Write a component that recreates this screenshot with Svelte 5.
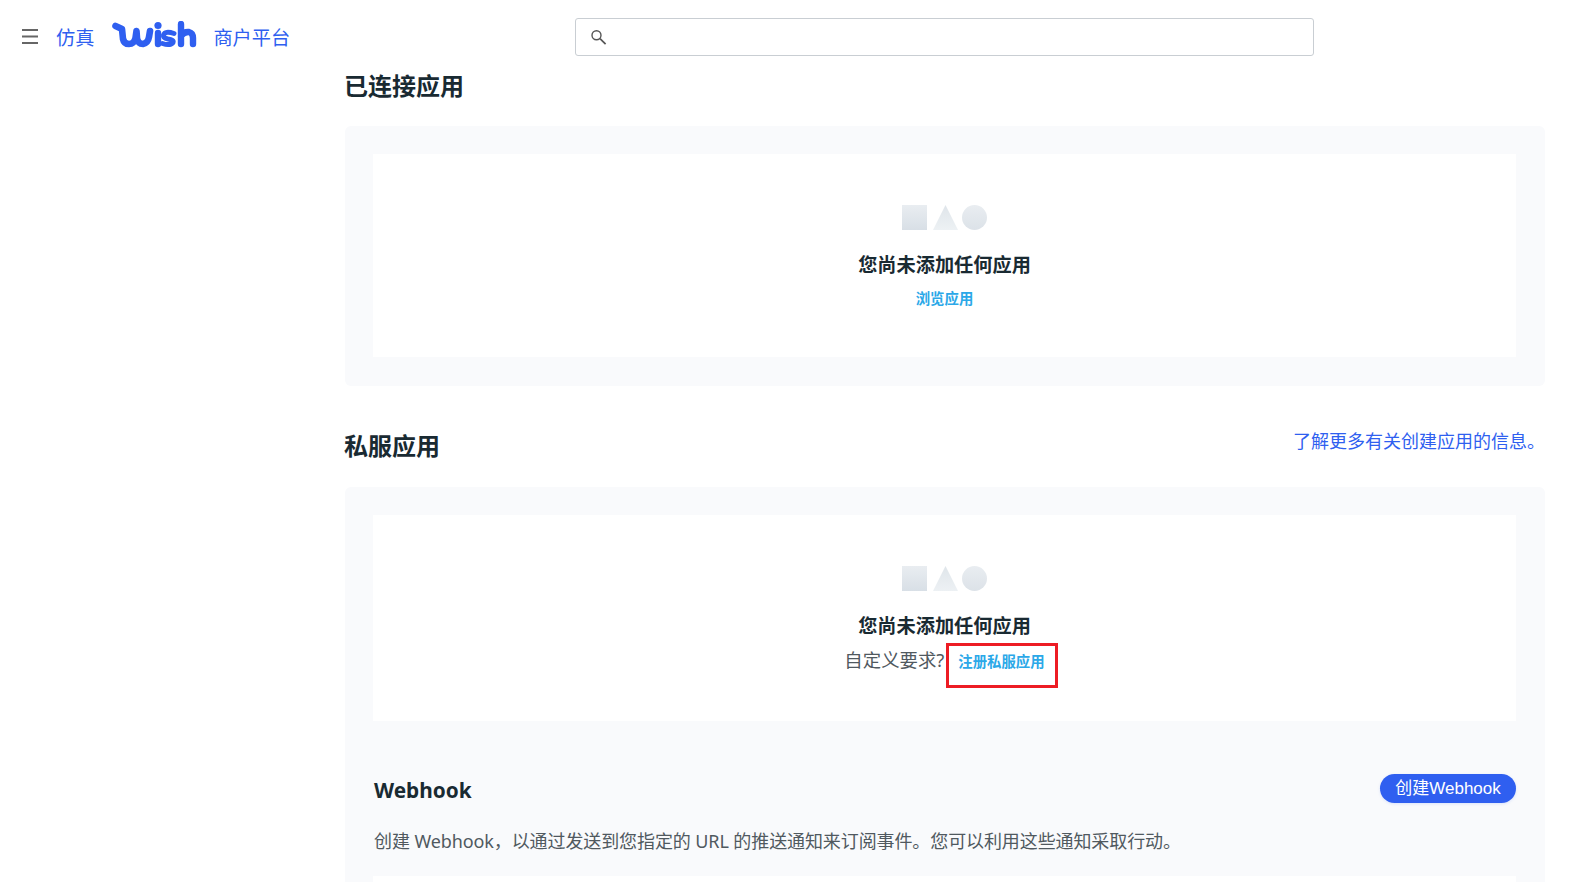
<script>
  const connected = { title: "已连接应用" };
</script>

<div class="page">
  <header class="topbar">
    <div class="brand">
      <svg class="menu" width="16" height="15" viewBox="0 0 16 15" aria-hidden="true">
        <path d="M0 1h16M0 7.5h16M0 14h16" stroke="#666" stroke-width="2" fill="none" />
      </svg>
      <span class="brand-text sim">仿真</span>
      <svg class="logo" width="85" height="28" viewBox="0 0 85 28" aria-hidden="true">
        <g fill="none" stroke="#2f5ff0" stroke-linecap="round" stroke-linejoin="round">
          <path stroke-width="6.6" d="M3.5 5 L10 8 L11 18 Q12 23 17 23 Q22 23 23.5 17 L24.5 10 L25 17 Q26 23 31 23 Q36 22 37 16 L38 10" />
          <path stroke-width="6.4" d="M46 12 V23" />
          <path stroke-width="5" d="M62 12.5 Q53 9.5 51.5 14 Q51 17 56 18 Q62 19 61 21.5 Q58 25 50.5 22.5" />
          <path stroke-width="6.4" d="M69 3 V23 M69 15 Q72 10.5 77 11 Q81 12 81 17 V23" />
        </g>
        <circle cx="46" cy="4.5" r="3.6" fill="#2f5ff0" />
      </svg>
      <span class="brand-text">商户平台</span>
    </div>
    <div class="search">
      <svg width="16" height="15" viewBox="0 0 16 15" aria-hidden="true">
        <circle cx="5.5" cy="5.2" r="4.5" stroke="#555" stroke-width="1.4" fill="none" />
        <path d="M9 8.6l5.6 5.6" stroke="#555" stroke-width="1.7" fill="none" />
      </svg>
    </div>
  </header>

  <main class="content">
    <section>
      <h2 class="first">{connected.title}</h2>
      <div class="panel">
        <div class="inner">
          <div class="shapes">
            <span class="square"></span>
            <span class="triangle"></span>
            <span class="circle"></span>
          </div>
          <p class="empty-title">您尚未添加任何应用</p>
          <a class="link browse" href="#browse">浏览应用</a>
        </div>
      </div>
    </section>

    <section class="private">
      <div class="section-head">
        <h2>私服应用</h2>
        <a class="learn" href="#learn">了解更多有关创建应用的信息。</a>
      </div>
      <div class="panel open">
        <div class="inner tall">
          <div class="shapes">
            <span class="square"></span>
            <span class="triangle"></span>
            <span class="circle"></span>
          </div>
          <p class="empty-title">您尚未添加任何应用</p>
          <div class="custom">
            <span class="ask">自定义要求?</span>
            <a class="link marked" href="#register">注册私服应用</a>
          </div>
        </div>

        <div class="webhook-head">
          <h3>Webhook</h3>
          <button type="button">创建Webhook</button>
        </div>
        <p class="desc">创建 Webhook，以通过发送到您指定的 URL 的推送通知来订阅事件。您可以利用这些通知采取行动。</p>
        <div class="inner rest"></div>
      </div>
    </section>
  </main>
</div>

<style>
  :global(body) {
    background: #fff;
    font-family: "Noto Sans", "Noto Sans CJK SC", sans-serif;
  }

  .page {
    height: 882px;
    overflow: hidden;
  }

  .topbar {
    display: flex;
    align-items: flex-start;
    height: 68px;
    padding-top: 18px;
    box-sizing: border-box;
  }

  .brand {
    width: 575px;
    height: 37px;
    padding-left: 22px;
    box-sizing: border-box;
    display: flex;
    align-items: center;
  }

  .menu {
    margin-right: 18px;
  }

  .brand-text {
    font-size: 19.2px;
    color: #2f5ff0;
  }

  .logo {
    margin: -3px 16px 0 18px;
  }

  .search {
    width: 739px;
    height: 38px;
    box-sizing: border-box;
    border: 1px solid #c9ced3;
    border-radius: 3px;
    padding-left: 15px;
    display: flex;
    align-items: center;
  }

  .content {
    margin: 0 50px 0 345px;
  }

  h2 {
    margin: 0 0 0 -1px;
    font-size: 24px;
    line-height: 36px;
    font-weight: 700;
    color: #192a32;
  }

  h2.first {
    margin-bottom: 22px;
  }

  .panel {
    background: #f9fafc;
    border-radius: 6px;
    padding: 28px 29px 29px 28px;
  }

  .panel.open {
    border-radius: 6px 6px 0 0;
    padding-bottom: 0;
  }

  .inner {
    background: #fff;
    height: 203px;
    box-sizing: border-box;
    padding-top: 51px;
    display: flex;
    flex-direction: column;
    align-items: center;
  }

  .inner.tall {
    height: 206px;
  }

  .inner.rest {
    height: 40px;
  }

  .shapes {
    display: flex;
    gap: 6px;
    height: 25px;
  }

  .shapes span {
    display: block;
    width: 25px;
    height: 25px;
  }

  .square {
    background: linear-gradient(#e9edf1, #d8dfe6);
  }

  .triangle {
    background: linear-gradient(#dfe5ea, #edf1f4);
    clip-path: polygon(50% 0, 100% 100%, 0 100%);
  }

  .shapes .circle {
    background: linear-gradient(#e9edf1, #dce2e8);
    border-radius: 50%;
    margin-left: -2px;
  }

  .empty-title {
    margin: 21px 0 0;
    font-size: 19.2px;
    line-height: 28px;
    font-weight: 700;
    color: #192a32;
  }

  .link {
    font-size: 14.4px;
    font-weight: 700;
    color: #2ba8e8;
    text-decoration: none;
  }

  .browse {
    margin-top: 10px;
    line-height: 20px;
  }

  .custom {
    display: flex;
    align-items: flex-start;
    margin: 3px 0 0 13px;
    font-size: 18.4px;
    line-height: 28px;
    color: #50595f;
  }

  .ask {
    margin-top: 3px;
  }

  .marked {
    margin-left: 2px;
    padding: 5px 10px 12px 9px;
    line-height: 22px;
    border: 3px solid #ed1c24;
  }

  .section-head {
    display: flex;
    justify-content: space-between;
    align-items: flex-start;
    height: 59px;
  }

  .private {
    margin-top: 42px;
  }

  .learn {
    font-size: 18px;
    line-height: 28px;
    color: #2f5ff0;
    text-decoration: none;
    margin-top: -1px;
  }

  .webhook-head {
    display: flex;
    justify-content: space-between;
    align-items: center;
    margin-top: 53px;
    height: 29px;
  }

  h3 {
    margin: 2px 0 0 1px;
    font-size: 20.8px;
    font-weight: 700;
    color: #192a32;
  }

  button {
    height: 29px;
    width: 136px;
    padding: 0;
    border: 0;
    border-radius: 15px;
    background: #2f5ff0;
    color: #fff;
    font-family: "Liberation Sans", "Noto Sans CJK SC", sans-serif;
    font-size: 17px;
    line-height: 29px;
    box-shadow: 0 1px 3px rgba(47, 95, 240, 0.15);
  }

  .desc {
    margin: 24px 0 21px 1px;
    font-size: 18px;
    line-height: 28px;
    letter-spacing: -0.1px;
    color: #50595f;
  }
</style>
